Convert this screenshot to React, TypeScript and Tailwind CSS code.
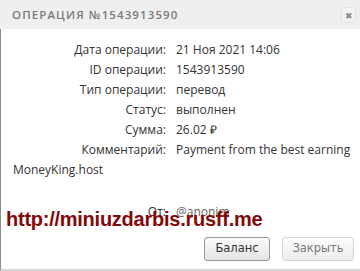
import React from 'react'

const rows: [string, string][] = [
  ['Дата операции:', '21 Ноя 2021 14:06'],
  ['ID операции:', '1543913590'],
  ['Тип операции:', 'перевод'],
  ['Статус:', 'выполнен'],
  ['Сумма:', '26.02 ₽'],
]

export default function App() {
  return (
    <div className="relative w-[360px] h-[271px] bg-white overflow-hidden font-['Open_Sans',sans-serif] text-[12px] text-[#333]">
      {/* title bar */}
      <div className="h-[29px] bg-[#efefef] flex items-center justify-between pl-[12px] pr-[4px]">
        <div className="text-[11.5px] tracking-[1.1px] text-[#7a7a7a] font-semibold">ОПЕРАЦИЯ №1543913590</div>
        <div className="w-[15px] h-[16px] mt-[1px] rounded-[3px] border border-[#e2e2e2] bg-[#f3f3f3] flex items-center justify-center text-[9px] leading-none text-[#888]">
          ✖
        </div>
      </div>

      {/* body */}
      <div className="h-[242px] border-l border-[#8c8c8c] border-b-2 border-b-[#d6d6d6] flex flex-col">
        <div className="pl-[12px] pr-[8px] pt-[11px] leading-[20px]">
          {rows.map(([k, v]) => (
            <div key={k}>
              <span className="inline-block w-[153px] text-right">{k}</span>
              <span className="ml-[10px]">{v}</span>
            </div>
          ))}
          <div>
            <span className="inline-block w-[153px] text-right">Комментарий:</span>
            <span className="ml-[10px]">Payment from the best earning MoneyKing.host</span>
          </div>
          <div className="mt-[22px]">
            <span className="inline-block w-[153px] text-right">От:</span>
            <span className="ml-[10px] text-[#666]">@anonim</span>
          </div>
        </div>

        <div className="flex justify-end gap-[12px] pr-[6px] mt-[15px] font-['DejaVu_Sans',sans-serif] text-[11.5px]">
          <button className="w-[66px] h-[24px] rounded-[3px] border border-[#9a9a9a] bg-gradient-to-b from-[#fafafa] to-[#e4e4e4] text-[#333]">
            Баланс
          </button>
          <button className="w-[72px] h-[24px] rounded-[3px] border border-[#d4d4d4] bg-gradient-to-b from-[#fcfcfc] to-[#ededed] text-[#777]">
            Закрыть
          </button>
        </div>
      </div>

      {/* watermark */}
      <div className="absolute left-[6px] top-[209px] font-['Liberation_Sans',sans-serif] font-bold text-[20px] leading-[20px] tracking-[-0.25px] text-[#850808]">
        http://miniuzdarbis.rusff.me
      </div>
    </div>
  )
}
